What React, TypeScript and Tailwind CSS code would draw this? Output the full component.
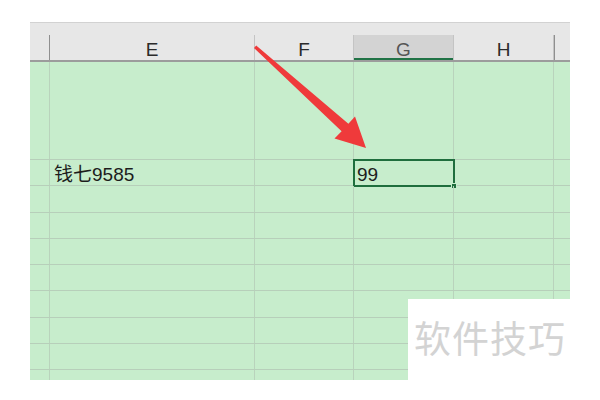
import React from "react";

const COLS = "grid-cols-[20px_205px_99px_100px_100px_16px]";
const FONT = { fontFamily: '"Liberation Sans", "Noto Sans CJK SC", sans-serif' };

function Row({ h, children }: { h: string; children?: React.ReactNode[] }) {
  const cells = children ?? [];
  return (
    <div className={`grid ${COLS} ${h} border-b border-[#b7cfba]`}>
      {[0, 1, 2, 3, 4, 5].map((i) => (
        <div key={i} className="relative border-r border-[#b9d3bc] last:border-r-0 flex items-end overflow-visible">
          {cells[i]}
        </div>
      ))}
    </div>
  );
}

export default function App() {
  const letters = ["", "E", "F", "G", "H", ""];
  return (
    <div className="relative w-[600px] h-[400px] bg-white overflow-hidden" style={FONT}>
      <div className="ml-[30px] mt-[22px] w-[540px] bg-[#c7edcc]">
        {/* column header */}
        <div className={`grid ${COLS} h-[40px] bg-[#e7e7e7] border-t border-[#d2d2d2] border-b-2 border-b-[#9c9c9c]`}>
          {letters.map((l, i) => (
            <div key={i} className="flex items-end">
              <div
                className={`h-[25px] w-full flex items-center justify-center pt-[4px] text-[19px] leading-none ${
                  i === 0 ? "border-r border-[#8f8f8f]" : i === 5 ? "border-l border-[#8f8f8f]" : "border-r border-[#c4c4c4]"
                } ${i === 3 ? "bg-[#d3d3d3] text-[#555555] shadow-[inset_0_-2px_0_#217346]" : "text-[#2b2b2b]"}`}
              >
                {l}
              </div>
            </div>
          ))}
        </div>

        {/* rows */}
        <Row h="h-[98px]" />
        <Row h="h-[26.25px]">
          {[
            null,
            <span key="e" className="pl-[4px] pb-[1px] text-[19px] leading-none text-[#1d1d1d]">钱七9585</span>,
            null,
            <div key="g" className="absolute -left-[1px] -top-[1px] w-[102px] h-[28px] border-2 border-[#1f6e3d]">
              <span className="absolute left-[2px] top-[4px] text-[19px] leading-none text-[#1d1d1d]">99</span>
              <div className="absolute -right-[4px] -bottom-[4px] w-[6px] h-[6px] bg-[#1f6e3d] border border-[#c7edcc]" />
            </div>,
          ]}
        </Row>
        {[0, 1, 2, 3, 4, 5, 6].map((i) => (
          <Row key={i} h="h-[26.25px]" />
        ))}
        <div className={`grid ${COLS} h-[10px]`}>
          {[0, 1, 2, 3, 4, 5].map((i) => (
            <div key={i} className="border-r border-[#b9d3bc] last:border-r-0" />
          ))}
        </div>
      </div>

      {/* arrow */}
      <svg className="absolute left-0 top-0" width="600" height="400" viewBox="0 0 600 400">
        <polygon
          points="256.2,45.5 348.4,123.8 355,116.5 366,148 334.5,138.5 341.6,131.2 254,48"
          fill="#ef3a3b"
        />
      </svg>

      {/* watermark */}
      <div className="absolute left-[408px] top-[299px] w-[192px] h-[101px] bg-white">
        <div
          className="pl-[6px] pt-[20px] text-[37px] leading-none text-[#d3d3d3] tracking-[1px]"
          style={{ fontFamily: '"Noto Sans CJK SC", sans-serif' }}
        >
          软件技巧
        </div>
      </div>
    </div>
  );
}
